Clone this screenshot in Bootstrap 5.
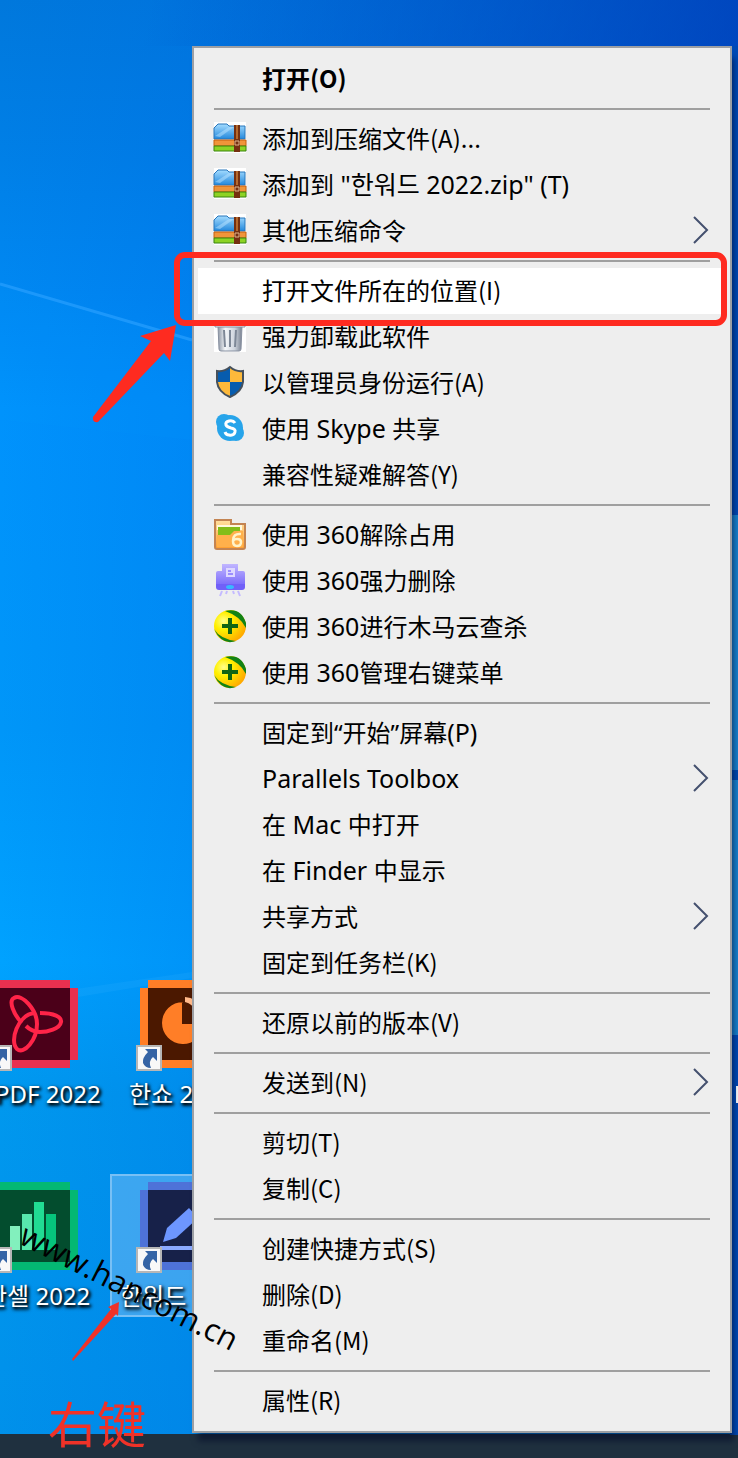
<!DOCTYPE html>
<html lang="zh-CN">
<head>
<meta charset="utf-8">
<meta name="viewport" content="width=device-width, initial-scale=1">
<title>桌面</title>
<link href="https://cdn.jsdelivr.net/npm/bootstrap@5.3.0/dist/css/bootstrap.min.css" rel="stylesheet">
<style>
body { font-family: "Noto Sans CJK SC", "Noto Sans CJK KR", sans-serif; font-size: 24px; line-height: 30px; background: #1f303f; }
.desktop { background: linear-gradient(100deg, transparent 20%, rgba(0,40,170,.6) 100%) 0 0 / 100% 46px no-repeat, linear-gradient(90deg, transparent 0, rgba(0,100,225,.22) 26%), linear-gradient(180deg, #0078dc 0, #007fe6 10%, #0088f2 20%, #0092fc 28%, #0096f8 50%, #00a2ff 66%, #0098ee 75%, #0090ea 100%); }
.wallpaper { position: absolute; inset: 0; width: 100%; height: 100%; }
.taskbar { height: 24px; background: #1f303f; }
.ctx-menu { margin: 46px 6px 1px 192px; background: #eee; border: 2px solid #9c9fa4; padding: 8px 4px 7px; color: #000; box-shadow: 4px 10px 6px -2px rgba(0,10,40,.55); }
.ctx-item { height: 46px; padding: 0 17px 2px 15px; color: #000; white-space: pre; }
.ctx-item.active-row { background: #fff; }
.ctx-item .ico { width: 34px; height: 34px; margin-right: 15px; flex: none; }
.latin { font-family: "Noto Sans", "Noto Sans CJK SC", "Noto Sans CJK KR", sans-serif; }
.ctx-item b { font-size: 25px; font-weight: 400; }
.rule { height: 2px; margin: 6px 16px; background: #9f9f9f; }
.chev { width: 16px; height: 28px; margin-left: auto; fill: none; stroke: #44506e; stroke-width: 2; }
.frame-red { position: absolute; z-index: 2; left: -24px; right: -1px; top: -16px; bottom: -12px; border: 6px solid #fe2b20; border-radius: 11px; pointer-events: none; }
.shortcut { position: absolute; width: 160px; color: #fff; text-shadow: 2px 2px 3px #000, 1px 2px 4px #000; white-space: nowrap; text-decoration: none; }
.shortcut svg { display: block; }
.shortcut span { display: block; margin-top: 8px; }
.overlay-art { position: absolute; z-index: 3; left: 0; pointer-events: none; }
.site-tag { position: absolute; z-index: 4; left: 23px; top: 1212px; color: #000; font: 500 31px/40px "Open Sans", sans-serif; transform: rotate(27deg); transform-origin: 0 50%; white-space: nowrap; }
.note { position: absolute; left: 48px; bottom: 4px; z-index: 3; color: #f03228; font-size: 49px; line-height: 64px; }
</style>
</head>
<body>
<svg width="0" height="0" class="position-absolute" aria-hidden="true">
<defs>
<linearGradient id="gb" x2="0" y2="1"><stop stop-color="#a4dcff"/><stop offset="1" stop-color="#2388dc"/></linearGradient>
<linearGradient id="gf" x2="0" y2="1"><stop stop-color="#ffe0a0"/><stop offset="1" stop-color="#ff9d2c"/></linearGradient>
<linearGradient id="gp" x2="0" y2="1"><stop stop-color="#c1b6ff"/><stop offset="1" stop-color="#7565fa"/></linearGradient>
<linearGradient id="gt"><stop stop-color="#8d96a4"/><stop offset=".3" stop-color="#f5f7fa"/><stop offset=".7" stop-color="#cdd3dc"/><stop offset="1" stop-color="#77808f"/></linearGradient>
<radialGradient id="gy" cx=".3" cy=".35" r=".8"><stop stop-color="#ffff8c"/><stop offset=".35" stop-color="#fff000"/><stop offset="1" stop-color="#ff9e00"/></radialGradient>
<symbol id="zip" viewBox="0 0 34 34"><path fill="#fff" d="M1 1h32v31H1z"/><path d="M1 18V7l4-4h9l2 2h16v13z" fill="url(#gb)" stroke="#2876bb"/><path d="M2 15 16 6h5L7 16z" fill="#b9e4ff" opacity=".5"/><path d="M1 19h32v6H1z" fill="#f0953a" stroke="#c8600c"/><path d="M1 25h32v5H1z" fill="#8dd324" stroke="#38850f"/><path d="M21 4h6v27h-6z" fill="#753010"/><path d="M24 4v14" stroke="#b5692d" stroke-width="2"/><path d="M22 20h4v4h-4z" fill="none" stroke="#e0b48b"/></symbol>
<symbol id="bin" viewBox="0 0 34 34"><path fill="#fff" d="M1 1h32v32H1z"/><path d="m5 7 1 23q0 2 2 2h18q2 0 2-2l1-23z" fill="url(#gt)" stroke="#8790a0"/><path d="M2 4h30v4H2z" fill="#eef1f5" stroke="#8790a0"/><path d="m11 11 1 17m5-17v17m6-17-1 17" fill="none" stroke="#7d8796" stroke-width="2"/></symbol>
<symbol id="shield" viewBox="0 0 34 34"><path d="M17 2q6 5 13 4v11q-1 10-13 15Q5 27 4 17V6q7 1 13-4z" fill="#fdb93b"/><path d="M17 2v15H4V6q7 1 13-4zm0 15h13q-1 10-13 15z" fill="#075cae"/><path d="M17 2q6 5 13 4v11q-1 10-13 15Q5 27 4 17V6q7 1 13-4z" fill="none" stroke="#46505b" stroke-width="2"/></symbol>
<symbol id="skype" viewBox="0 0 34 34"><circle cx="17" cy="17" r="13" fill="#27a4ea"/><circle cx="11" cy="11" r="8" fill="#27a4ea"/><circle cx="23" cy="22" r="8" fill="#27a4ea"/><path d="M22 12q-2-3-6-2-4 1-3 4 1 2 5 3 5 1 4 4-1 4-6 3-3 0-4-3" fill="none" stroke="#fff" stroke-width="3"/></symbol>
<symbol id="folder" viewBox="0 0 34 34"><path d="M2 30V3h16v4h14v23q0 2-2 2H4q-2 0-2-2z" fill="url(#gf)" stroke="#c38452" stroke-width="2"/><path d="M4 8h25v5H4z" fill="#fff8dd"/><path d="M5 10h22v8H5z" fill="#83bd19"/><path d="M4 18h13l4-4h9v16H4z" fill="#ffb04b"/><path d="M28 17q-8-1-8 7 0 5 4 5t4-4q0-3-4-3-3 0-4 2" fill="none" stroke="#fff3c8" stroke-width="2.5"/></symbol>
<symbol id="shred" viewBox="0 0 34 34"><path d="M9 1h16v7h5q2 0 2 2v14H3V10q0-2 2-2h4z" fill="url(#gp)"/><path d="M3 21h29v3q0 3-3 3H6q-3 0-3-3z" fill="#7160f8"/><path d="M13 5h9v9h-9z" fill="#ded8ff"/><path d="M15 8h3m-3 3h5" stroke="#9b8dff" stroke-width="2"/><ellipse cx="17" cy="24" rx="4" ry="2" fill="#38b8ff"/><path d="m9 28-2 5m7-5-1 3m7-3 1 3m4-3 2 5" stroke="#c4baff" stroke-width="2"/></symbol>
<symbol id="s360" viewBox="0 0 34 34"><circle cx="17" cy="17" r="16" fill="url(#gy)"/><path d="M12 2Q28-2 33 14v5Q27 7 12 2zM1 20q6 10 22 12Q9 37 1 20z" fill="#128315"/><path d="M17 9v16M9 17h16" stroke="#126514" stroke-width="4"/></symbol>
<symbol id="link" viewBox="0 0 26 26"><path d="M1 1h24v24H1z" fill="#f8f8f8" stroke="#b6b6b6" stroke-width="2"/><path d="M9 4h12v12l-4-4q-5 4-2 11-6 0-8-5-1-5 5-11z" fill="#3564a5"/></symbol>
</defs>
</svg>

<div class="desktop position-relative min-vh-100 d-flex flex-column overflow-hidden">
<svg class="wallpaper" viewBox="0 0 738 1458" preserveAspectRatio="none" aria-hidden="true">
<path d="M0 285 192 340V440L0 420z" fill="#00a0ff" opacity=".1"/>
<path d="M0 284 192 340" stroke="#28a0ff" stroke-width="3" opacity=".7"/>
<path d="M0 1000 192 972V978L0 1010z" fill="#30b4ff" opacity=".18"/>
<path d="M730 46h8v469h-8z" fill="#0049b5"/><path d="M730 515h8v520h-8z" fill="#1682cf"/><path d="M730 770h8v10h-8z" fill="#0048b0"/><path d="M730 1035h8v400h-8z" fill="#0049b5"/>
<path d="M736 1086h2v17h-2z" fill="#fff"/>
</svg>

<a href="#" class="shortcut latin" style="left:-60px;top:979px">
<svg width="162" height="92" viewBox="-60 0 162 92"><path d="M-10 1h80v8h8v72h-8v8h-80z" fill="#e9304f"/><path d="M-10 9h80v72h-80z" fill="#4b0019"/><g fill="none" stroke="#ff2448" stroke-width="4"><path d="M22 44C14 36 8 22 14 19c8-5 23 12 23 26C37 61 24 76 17 70 9 62 18 36 34 34"/><path d="M40 34c14 0 22 4 21 9-1 7-14 10-21 10-5 0-10-2-14-6"/></g><use href="#link" x="-14" y="66" width="26" height="26"/></svg>
<span style="margin-left:55px">PDF 2022</span></a>
<a href="#" class="shortcut latin" style="left:112px;top:979px">
<svg width="110" height="92"><path d="M36 1h74v88H36v-8h-8V9h8z" fill="#ff7e27"/><path d="M36 9h74v72H36z" fill="#4b1800"/><path d="M71 23a21 21 0 1 0 21 22H70V23z" fill="#ff7e27"/><path d="M73 18q12 1 16 11l-6 3q-2-7-10-9z" fill="#ffb98a"/><use href="#link" x="24" y="66" width="26" height="26"/></svg>
<span style="margin-left:17px">한쇼 2022</span></a>
<a href="#" class="shortcut latin" style="left:-60px;top:1181px">
<svg width="162" height="92" viewBox="-60 0 162 92"><path d="M-10 1h80v8h8v72h-8v8h-80z" fill="#04b873"/><path d="M-10 9h80v72h-80z" fill="#034d2e"/><path d="M10 45h10v24H10z" fill="#82f0bd"/><path d="M22 33h10v36H22z" fill="#58e8ad"/><path d="M34 21h10v48H34z" fill="#21dc93"/><path d="M46 33h10v36H46z" fill="#06c47c"/><use href="#link" x="-14" y="66" width="26" height="26"/></svg>
<span style="margin-left:45px">한셀 2022</span></a>
<a href="#" class="shortcut latin" style="left:110px;top:1174px;height:143px;padding:5px 0 0;background:rgba(120,190,245,.5);border:2px solid #78c0f5">
<svg width="110" height="92"><path d="M36 1h74v88H36v-8h-8V9h8z" fill="#4e72d8"/><path d="M36 9h74v72H36z" fill="#172149"/><path d="m51 61 4-14 22-20 9 10-22 20z" fill="#6d96ff"/><path d="M48 65h62v4H48z" fill="#8baaff"/><use href="#link" x="24" y="66" width="26" height="26"/></svg>
<span style="margin-left:8px">한워드</span></a>

<nav class="ctx-menu position-relative" aria-label="右键菜单">
<a href="#" class="ctx-item d-flex align-items-center text-decoration-none fw-bold"><span class="ico"></span>打开(O)</a>
<div class="rule"></div>
<a href="#" class="ctx-item d-flex align-items-center text-decoration-none"><svg class="ico"><use href="#zip"/></svg>添加到压缩文件(A)...</a>
<a href="#" class="ctx-item latin d-flex align-items-center text-decoration-none"><svg class="ico"><use href="#zip"/></svg><span>添加到<b> "한워드 2022.zip" (T)</b></span></a>
<a href="#" class="ctx-item d-flex align-items-center text-decoration-none"><svg class="ico"><use href="#zip"/></svg>其他压缩命令<svg class="chev" viewBox="0 0 16 28"><path d="m1 1 13 13L1 27"/></svg></a>
<div class="rule"></div>
<a href="#" class="ctx-item active-row position-relative d-flex align-items-center text-decoration-none"><span class="ico"></span>打开文件所在的位置(I)<span class="frame-red"></span></a>
<a href="#" class="ctx-item d-flex align-items-center text-decoration-none"><svg class="ico"><use href="#bin"/></svg>强力卸载此软件</a>
<a href="#" class="ctx-item d-flex align-items-center text-decoration-none"><svg class="ico"><use href="#shield"/></svg>以管理员身份运行(A)</a>
<a href="#" class="ctx-item latin d-flex align-items-center text-decoration-none"><svg class="ico"><use href="#skype"/></svg><span>使用<b> Skype </b>共享</span></a>
<a href="#" class="ctx-item d-flex align-items-center text-decoration-none"><span class="ico"></span>兼容性疑难解答(Y)</a>
<div class="rule"></div>
<a href="#" class="ctx-item latin d-flex align-items-center text-decoration-none"><svg class="ico"><use href="#folder"/></svg><span>使用<b> 360</b>解除占用</span></a>
<a href="#" class="ctx-item latin d-flex align-items-center text-decoration-none"><svg class="ico"><use href="#shred"/></svg><span>使用<b> 360</b>强力删除</span></a>
<a href="#" class="ctx-item latin d-flex align-items-center text-decoration-none"><svg class="ico"><use href="#s360"/></svg><span>使用<b> 360</b>进行木马云查杀</span></a>
<a href="#" class="ctx-item latin d-flex align-items-center text-decoration-none"><svg class="ico"><use href="#s360"/></svg><span>使用<b> 360</b>管理右键菜单</span></a>
<div class="rule"></div>
<a href="#" class="ctx-item latin d-flex align-items-center text-decoration-none"><span class="ico"></span><span>固定到“开始”屏幕<b>(P)</b></span></a>
<a href="#" class="ctx-item latin d-flex align-items-center text-decoration-none"><span class="ico"></span><b>Parallels Toolbox</b><svg class="chev" viewBox="0 0 16 28"><path d="m1 1 13 13L1 27"/></svg></a>
<a href="#" class="ctx-item latin d-flex align-items-center text-decoration-none"><span class="ico"></span><span>在<b> Mac </b>中打开</span></a>
<a href="#" class="ctx-item latin d-flex align-items-center text-decoration-none"><span class="ico"></span><span>在<b> Finder </b>中显示</span></a>
<a href="#" class="ctx-item d-flex align-items-center text-decoration-none"><span class="ico"></span>共享方式<svg class="chev" viewBox="0 0 16 28"><path d="m1 1 13 13L1 27"/></svg></a>
<a href="#" class="ctx-item d-flex align-items-center text-decoration-none"><span class="ico"></span>固定到任务栏(K)</a>
<div class="rule"></div>
<a href="#" class="ctx-item d-flex align-items-center text-decoration-none"><span class="ico"></span>还原以前的版本(V)</a>
<div class="rule"></div>
<a href="#" class="ctx-item d-flex align-items-center text-decoration-none"><span class="ico"></span>发送到(N)<svg class="chev" viewBox="0 0 16 28"><path d="m1 1 13 13L1 27"/></svg></a>
<div class="rule"></div>
<a href="#" class="ctx-item d-flex align-items-center text-decoration-none"><span class="ico"></span>剪切(T)</a>
<a href="#" class="ctx-item d-flex align-items-center text-decoration-none"><span class="ico"></span>复制(C)</a>
<div class="rule"></div>
<a href="#" class="ctx-item d-flex align-items-center text-decoration-none"><span class="ico"></span>创建快捷方式(S)</a>
<a href="#" class="ctx-item d-flex align-items-center text-decoration-none"><span class="ico"></span>删除(D)</a>
<a href="#" class="ctx-item d-flex align-items-center text-decoration-none"><span class="ico"></span>重命名(M)</a>
<div class="rule"></div>
<a href="#" class="ctx-item d-flex align-items-center text-decoration-none"><span class="ico"></span>属性(R)</a>
</nav>
<footer class="taskbar mt-auto"></footer>
<svg class="overlay-art" style="top:320px" width="200" height="110" aria-hidden="true"><path d="m176 5-36 11 11 5L93 97q-1 6 5 5l66-69 6 8z" fill="#fe2b20"/></svg>
<svg class="overlay-art" style="top:1295px" width="130" height="70" aria-hidden="true"><path d="m119 7-11 5 3 2-39 50 1 2 43-47 2 2z" fill="#f03228"/></svg>
<div class="site-tag">www.hancom.cn</div>
<div class="note">右键</div>
</div>
<script src="https://cdn.jsdelivr.net/npm/bootstrap@5.3.0/dist/js/bootstrap.bundle.min.js"></script>
</body>
</html>
